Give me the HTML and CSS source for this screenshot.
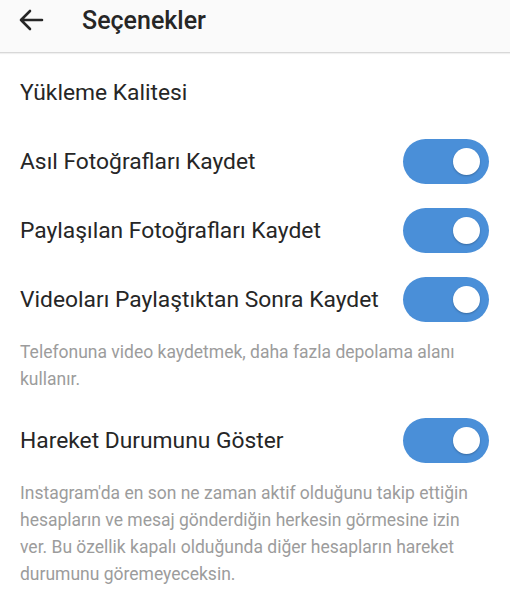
FILE: index.html
```html
<!DOCTYPE html>
<html lang="tr">
<head>
    <meta charset="UTF-8">
    <meta name="viewport" content="width=device-width, initial-scale=1.0">
    <title>Seçenekler</title>
    <link rel="stylesheet" href="styles.css">
</head>
<body>

    <div class="header">
        <svg class="back" width="26" height="22" viewBox="0 0 26 22">
            <path d="M24 11 H3 M12 2 L3 11 L12 20" fill="none" stroke="#262626" stroke-width="2.6" stroke-linecap="round" stroke-linejoin="round"/>
        </svg>
        <h1>Seçenekler</h1>
    </div>

    <div class="list">
        <div class="row">
            <span class="label">Yükleme Kalitesi</span>
        </div>
        <div class="row">
            <span class="label">Asıl Fotoğrafları Kaydet</span>
            <span class="toggle on"></span>
        </div>
        <div class="row">
            <span class="label">Paylaşılan Fotoğrafları Kaydet</span>
            <span class="toggle on"></span>
        </div>
        <div class="row">
            <span class="label">Videoları Paylaştıktan Sonra Kaydet</span>
            <span class="toggle on"></span>
        </div>
        <p class="desc">Telefonuna video kaydetmek, daha fazla depolama alanı kullanır.</p>

        <div class="row spaced">
            <span class="label">Hareket Durumunu Göster</span>
            <span class="toggle on"></span>
        </div>
        <p class="desc">Instagram'da en son ne zaman aktif olduğunu takip ettiğin hesapların ve mesaj gönderdiğin herkesin görmesine izin ver. Bu özellik kapalı olduğunda diğer hesapların hareket durumunu göremeyeceksin.</p>
    </div>

</body>
</html>
```

FILE: styles.css
```css
body {
    font-family: Roboto, "Noto Sans", sans-serif;
    background-color: #fff;
    color: #262626;
    margin: 0;
    padding: 0;
}

/* üst bar (ekran görüntüsünde üstü kesik) */
.header {
    display: flex;
    align-items: center;
    height: 40px;
    padding-bottom: 12px;
    background-color: #fafafa;
    border-bottom: 1px solid #d8d8d8;
    box-shadow: 0 1px 1px rgba(0, 0, 0, 0.06);
}

.header .back {
    margin-left: 18px;
}

.header h1 {
    margin: 0 0 0 38px;
    font-size: 25px;
    font-weight: 500;
    color: #262626;
}

.list {
    padding-top: 5px;
}

.row {
    display: flex;
    align-items: center;
    justify-content: space-between;
    height: 69px;
    padding: 0 21px 0 20px;
}

.row.spaced {
    margin-top: 13px;
}

.label {
    font-size: 22.8px;
    color: #262626;
}

/* anahtar */
.toggle {
    position: relative;
    flex-shrink: 0;
    width: 86px;
    height: 45px;
    border-radius: 23px;
    background-color: #4a8fd8;
}

.toggle::after {
    content: "";
    position: absolute;
    top: 9px;
    right: 9px;
    width: 27px;
    height: 27px;
    border-radius: 50%;
    background-color: #fff;
    box-shadow: 0 1px 2px rgba(0, 0, 0, 0.25);
}

.desc {
    margin: 5px 0 0;
    padding: 0 22px 0 20px;
    font-size: 17.5px;
    line-height: 27px;
    color: #9c9c9c;
}
```
